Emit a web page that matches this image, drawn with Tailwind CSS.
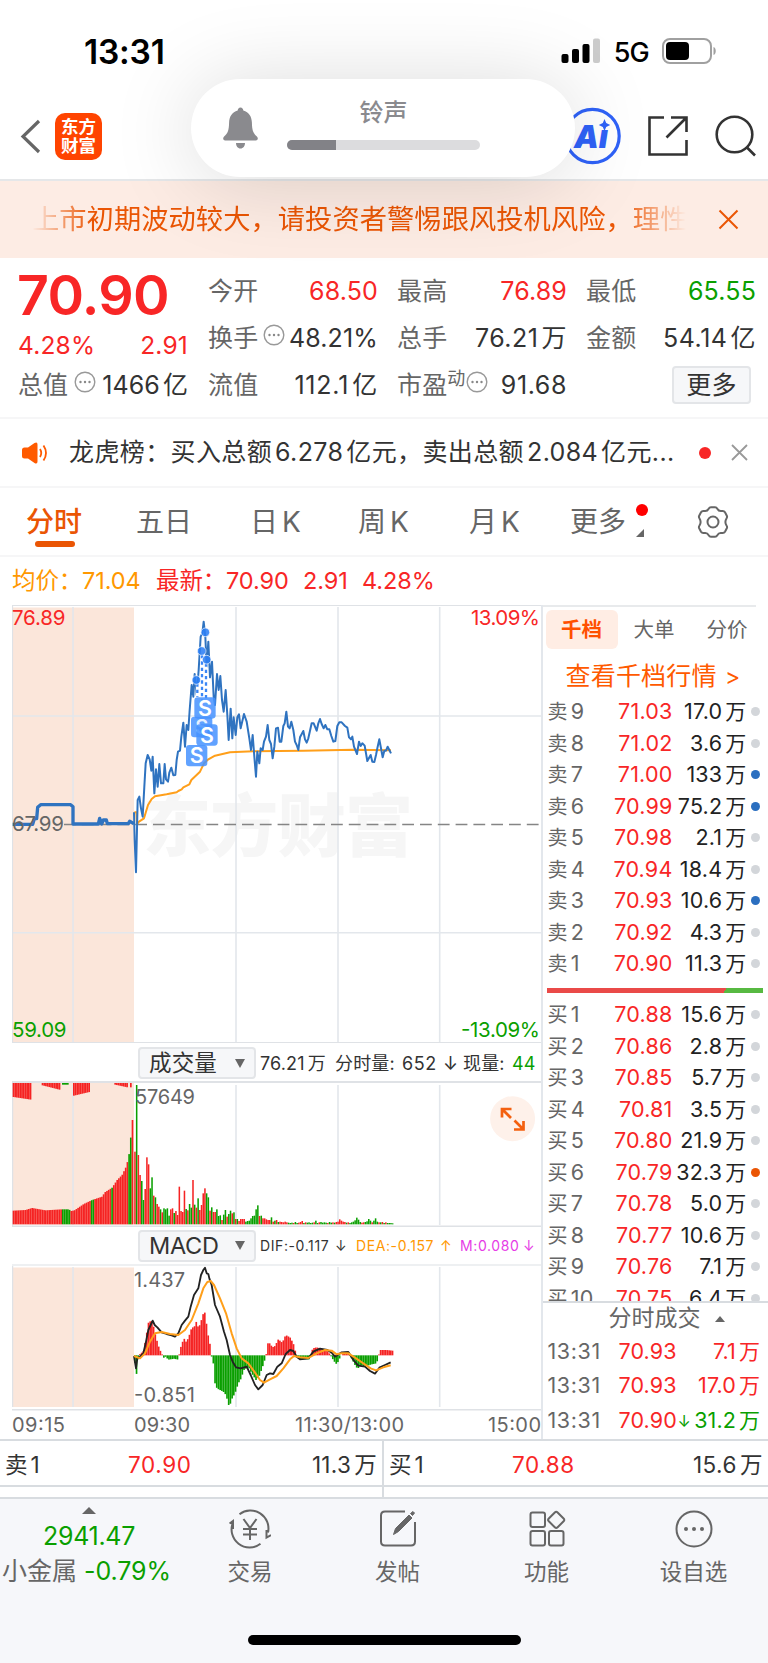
<!DOCTYPE html>
<html lang="zh-CN">
<head>
    <meta charset="UTF-8">
    <meta name="viewport" content="width=device-width, initial-scale=1.0">
    <title>东方财富</title>
    <script src="https://cdn.jsdelivr.net/npm/@tailwindcss/browser@4"></script>
</head>
<body class="w-[768px] h-[1663px] overflow-hidden flex flex-col bg-white text-[#333] font-['Inter','Noto_Sans_CJK_SC',sans-serif] whitespace-nowrap">

    <svg class="hidden">
        <symbol id="more" viewBox="0 0 22 22">
            <circle cx="11" cy="11" r="9.8" fill="none" stroke="#999" stroke-width="1.4"/>
            <circle cx="6.5" cy="11" r="1.2" fill="#888"/><circle cx="11" cy="11" r="1.2" fill="#888"/><circle cx="15.5" cy="11" r="1.2" fill="#888"/>
        </symbol>
    </svg>

    <!-- Header -->
    <header class="relative h-[181px] shrink-0 flex flex-col border-b-2 border-[#e5e7e9]">
        <div class="h-[102px] pl-[84px] pr-[51px] flex items-center justify-between text-black">
            <span class="mt-[2px] text-[33.500px] font-semibold tracking-[-0.2px]">13:31</span>
            <div class="flex items-center gap-[13px]">
                <svg class="w-[40px] h-[26px]" viewBox="0 0 40 26">
                    <rect x="0.5" y="16" width="7" height="9" rx="2"/>
                    <rect x="11" y="11" width="7" height="14" rx="2"/>
                    <rect x="21.500" y="6" width="7" height="19" rx="2"/>
                    <rect x="32" y="0.500" width="7" height="24.500" rx="2" fill="#ccc"/>
                </svg>
                <span class="mt-[3px] text-[27px] font-medium tracking-[-0.8px] leading-none">5G</span>
                <svg class="w-[55px] h-[26px]" viewBox="0 0 55 26">
                    <rect x="1" y="1" width="48" height="24" rx="7" fill="none" stroke="#a0a0a0" stroke-width="2"/>
                    <rect x="4" y="4" width="23" height="18" rx="4"/>
                    <path d="M51.500 9v8c3-1 3-7 0-8z" fill="#a0a0a0"/>
                </svg>
            </div>
        </div>
        <div class="h-[68px] pl-[20px] flex items-center">
            <svg class="w-[22px] h-[36px]" viewBox="0 0 22 36"><path d="M19 3L3 18.500 19 34" fill="none" stroke="#666" stroke-width="3.200"/></svg>
            <div class="ml-[13px] w-[47px] h-[47px] rounded-[10px] bg-[#ff4400] text-white text-[17.500px] leading-[19px] font-bold flex flex-col items-center justify-center">
                <span>东方</span><span>财富</span>
            </div>
            <svg class="ml-[462px] w-[60px] h-[60px]" viewBox="0 0 60 60">
                <circle cx="28.500" cy="30" r="26.700" fill="none" stroke="#2f62f8" stroke-width="3.200"/>
                <text x="10" y="42" font-size="32" font-weight="900" font-style="italic" fill="#2f62f8" textLength="34" lengthAdjust="spacingAndGlyphs">Aı</text>
                <path d="M40.500 13l1.700 4 4 2-4 2-1.700 4-1.700-4-4-2 4-2z" fill="#2f62f8"/>
            </svg>
            <svg class="ml-[23px] w-[42px] h-[42px]" viewBox="0 0 42 42" fill="none" stroke="#333" stroke-width="2.600">
                <path d="M17 2.500H2.500v37h37V25M24 2.500h15.500V17M39 3L19.500 22.500"/>
            </svg>
            <svg class="ml-[25px] w-[44px] h-[44px]" viewBox="0 0 44 44" fill="none" stroke="#333" stroke-width="2.600">
                <circle cx="20.500" cy="20.500" r="17.800"/><path d="M32.500 33L41 41.500"/>
            </svg>
        </div>
        <!-- Ringer volume toast -->
        <div class="absolute z-10 left-[191px] top-[79px] w-[384px] h-[98px] rounded-[49px] bg-white shadow-[0_4px_85px_rgba(0,0,0,0.15)] flex">
            <svg class="ml-[31px] mt-[28px] w-[37px] h-[43px]" viewBox="0 0 37 43" fill="#8a8a8e">
                <path d="M18.500 0.500c1.800 0 2.600 1.400 2.800 3 5.700 1.500 8.400 6.300 8.600 12 .2 8 1.200 10.500 5 14 1.400 1.400 1.300 4-1.100 4H3.200c-2.400 0-2.500-2.600-1.100-4 3.800-3.500 4.800-6 5-14 .2-5.700 2.900-10.500 8.600-12 .2-1.600 1-3 2.800-3zM14 36h9c0 3-1.800 5.500-4.500 5.500S14 39 14 36z"/>
            </svg>
            <div class="ml-[28px] mt-[20px] w-[193px] flex flex-col items-center">
                <span class="text-[24px] leading-[28px] font-medium text-[#8a8a8e]">铃声</span>
                <div class="mt-[13px] w-full h-[10px] rounded-full bg-[#dcdcde] overflow-hidden"><div class="w-[49px] h-full bg-[#828287]"></div></div>
            </div>
        </div>
    </header>

    <!-- Risk notice -->
    <div class="h-[77px] shrink-0 pl-[32px] flex items-center bg-[#fdece4] text-[#ea5504]">
        <div class="w-[654px] overflow-hidden text-[27.25px] leading-[40px] tracking-[0.06px] mask-[linear-gradient(to_right,transparent,black_9%,black_90%,transparent)]">上市初期波动较大，请投资者警惕跟风投机风险，理性</div>
        <svg class="ml-[32px] w-[21px] h-[21px]" viewBox="0 0 21 21"><path d="M1.500 1.500l18 18M19.500 1.500l-18 18" stroke="#ea5504" stroke-width="2"/></svg>
    </div>

    <!-- Quote -->
    <section class="h-[161px] shrink-0 pt-[10px] pl-[18px] flex gap-5 border-b-2 border-[#f6f6f7] text-[25px] leading-[47px]">
        <div class="w-[170px] shrink-0 text-[#f82626]">
            <div class="h-[54px] leading-[54px] text-[55.500px] font-semibold tracking-[-0.7px] -ml-[1px]">70.90</div>
            <div class="h-[40px] leading-[46px] flex justify-between text-[24.5px] tracking-[0.2px]"><span>4.28%</span><span>2.91</span></div>
            <div class="flex justify-between text-[#333]"><span class="text-[#666]">总值</span><svg class="mt-[9px] w-[22px] h-[22px]"><use href="#more"/></svg><span class="tracking-[0.1px]">1466<span class="ml-[3px]">亿</span></span></div>
        </div>
        <div class="w-[548px] grid grid-cols-3 gap-x-[19px] auto-rows-[47px] content-start tracking-[0.15px]">
            <div class="flex justify-between"><span class="text-[#666]">今开</span><span class="text-[#f82626]">68.50</span></div>
            <div class="flex justify-between"><span class="text-[#666]">最高</span><span class="text-[#f82626]">76.89</span></div>
            <div class="flex justify-between"><span class="text-[#666]">最低</span><span class="text-[#0a9f00]">65.55</span></div>
            <div class="flex justify-between"><span class="text-[#666]">换手</span><svg class="mt-[9px] w-[22px] h-[22px]"><use href="#more"/></svg><span>48.21%</span></div>
            <div class="flex justify-between"><span class="text-[#666]">总手</span><span class="tracking-[0.5px]">76.21<span class="ml-[3px]">万</span></span></div>
            <div class="flex justify-between"><span class="text-[#666]">金额</span><span class="tracking-[0.5px]">54.14<span class="ml-[3px]">亿</span></span></div>
            <div class="flex justify-between"><span class="text-[#666]">流值</span><span class="tracking-[0.8px]">112.1<span class="ml-[3px]">亿</span></span></div>
            <div class="flex"><span class="text-[#666]">市盈</span><span class="text-[18px] leading-[34px] text-[#666]">动</span><svg class="mt-[9px] ml-[1px] w-[22px] h-[22px]"><use href="#more"/></svg><span class="ml-auto tracking-[0.6px]">91.68</span></div>
            <div class="flex justify-end pr-[5px] pt-[4px]"><span class="w-[79px] h-[38px] rounded border-2 border-[#e3e5e8] bg-[#f6f7f9] text-center leading-[34px]">更多</span></div>
        </div>
    </section>

    <!-- News line -->
    <div class="h-[69px] shrink-0 pl-[21px] pr-[20px] flex items-center border-b-2 border-[#f6f6f7] text-[25px] tracking-[0.38px]">
        <svg class="w-[28px] h-[24px]" viewBox="0 0 28 24">
            <path d="M1 9q0-2.500 2.500-2.500H7L13.500 2q3-1.500 3 1.500v17q0 3-3 1.500L7 17.500H3.500Q1 17.500 1 15z" fill="#ff5a00"/>
            <path d="M19 8q2.500 4 0 8M22.500 4.500q5 7.500 0 15" fill="none" stroke="#ff5a00" stroke-width="1.800"/>
        </svg>
        <div class="ml-[20px] w-[608px]">龙虎榜：买入总额<span class="mx-[3px]">6.278</span>亿元，卖出总额<span class="mx-[3px]">2.084</span>亿元...</div>
        <span class="ml-[22px] w-[12px] h-[12px] rounded-full bg-[#f82626]"></span>
        <svg class="ml-auto w-[17px] h-[17px]" viewBox="0 0 17 17"><path d="M1 1l15 15M16 1L1 16" stroke="#999" stroke-width="1.800"/></svg>
    </div>

    <!-- Period tabs -->
    <nav class="h-[69px] shrink-0 pl-[26px] pr-[38px] flex items-center border-b-2 border-[#f6f6f7] text-[28px] text-[#666]">
        <div class="w-[110px]"><span class="relative text-[#ea5504] font-medium">分时<i class="absolute left-[9px] -bottom-[8px] w-[40px] h-[6px] rounded-full bg-[#ea5504]"></i></span></div>
        <span class="w-[114px]">五日</span>
        <span class="w-[108px] flex gap-[4px]">日<span>K</span></span>
        <span class="w-[111px] flex gap-[4px]">周<span>K</span></span>
        <span class="w-[101px] flex gap-[4px]">月<span>K</span></span>
        <span class="relative">更多<i class="absolute -right-[22px] top-[3px] w-[12px] h-[12px] rounded-full bg-[#ff0000]"></i>
            <svg class="absolute -right-[18px] bottom-[6px] w-[8px] h-[8px]" viewBox="0 0 8 8"><path d="M8 0v8H0z" fill="#666"/></svg>
        </span>
        <svg class="ml-auto w-[34px] h-[34px]" viewBox="0 0 34 34" fill="none" stroke="#666" stroke-width="2">
            <path d="M12.500 4q1-1.800 2.500-1.800h4q1.500 0 2.500 1.800 1 2 3.200 2h2q1.500 0 2.300 1.300l1.800 3.400q.7 1.400-.3 2.800-2.200 3.500 0 7 1 1.400.3 2.800L29 26.700q-.8 1.300-2.300 1.300h-2q-2.200 0-3.200 2-1 1.800-2.500 1.800h-4q-1.500 0-2.500-1.800-1-2-3.200-2h-2Q5.800 28 5 26.700l-1.800-3.400q-.7-1.400.3-2.800 2.200-3.500 0-7-1-1.400-.3-2.800L5 7.300Q5.800 6 7.300 6h2q2.200 0 3.200-2z"/>
            <circle cx="17" cy="17" r="5.500"/>
        </svg>
    </nav>

    <div class="h-[48px] shrink-0 pl-[12px] flex items-center text-[23.500px] tracking-[-0.1px] text-[#f82626]">
        <span class="w-[70px] text-[#ff9800]">均价：</span><span class="w-[74px] text-[#ff9800]">71.04</span>
        <span class="w-[70px]">最新：</span><span class="w-[77px]">70.90</span><span class="w-[59px]">2.91</span><span>4.28%</span>
    </div>

    <main class="h-[834px] shrink-0 flex">
        <!-- Charts -->
        <div class="w-[542.500px] pl-[12px] border-r-2 border-[#e3e7ec] flex flex-col">
            <svg class="w-[529px] h-[438px] shrink-0" viewBox="12 605 529 438">
                <rect x="12.500" y="607.500" width="121.500" height="434.500" fill="#fbe6da"/>
                <text x="143" y="851" font-size="68" font-weight="900" fill="#f6f6f6" textLength="270">东方财富</text>
                <path d="M12 716H541M12 932.700H541M73 607V1042M236 607V1042M338 607V1042M439.700 607V1042" stroke="#e3e7ec" stroke-width="1.600"/>
                <path d="M12.500 605V1043M12 605.500H541M12 1042.500H541" stroke="#dfe2e6" stroke-width="1.200"/>
                <path d="M64 824.500H541" stroke="#858585" stroke-width="1.500" stroke-dasharray="11.800 6"/>
                <g transform="translate(120 600) scale(.33333)" fill="none" stroke-linejoin="round">
                    <polyline stroke="#ff9f1a" stroke-width="6" points="43,637 49,637 51,672 57,665 72,655 84,615 95,597 105,589 140,583 170,577 175,573 185,568 190,562 208,553 214,540 240,515 252,490 265,478 285,467 330,457 400,454 550,452 700,449 813,451"/>
                    <polyline stroke="#2f73c0" stroke-width="10" points="-322,673 -262,673 -257,656 -250,656 -247,622 -238,614 -148,614 -141,620 -141,672 -65,672 -61,655 -55,672 -50,660 -41,660 -38,671 25,671 29,664 42,671"/>
                    <polyline stroke="#2f73c0" stroke-width="6" points="42,637 44,720 48,817 53,600 58,590 63,625 68,650 73,560 77,490 83,465 89,478 94,512 98,470 103,580 108,508 113,560 118,492 123,550 130,550 134,492 138,538 144,545 148,518 154,503 160,526 166,525 170,480 174,455 180,452 184,410 190,368 195,440 200,375 205,390 209,330 215,255 220,290 224,222 230,285 236,210 242,110 247,100 251,65 256,110 260,200 265,125 270,232 276,185 281,290 285,315 291,222 296,270 301,228 306,300 311,335 317,270 322,345 326,420 332,326 337,415 341,352 347,405 352,352 357,343 362,385 372,342 380,365 388,415 393,450 398,405 403,470 408,530 412,455 418,490 422,445 428,450 432,425 438,410 443,375 448,420 453,432 458,475 463,440 468,385 474,383 479,425 484,425 490,378 494,370 499,335 504,380 509,385 514,365 520,390 525,425 530,435 535,450 540,412 550,393 555,418 560,428 565,415 575,370 581,370 590,392 595,370 600,357 605,372 611,385 616,375 622,388 628,388 634,408 640,425 646,423 652,378 658,367 665,367 675,378 682,383 687,412 693,418 697,410 702,440 711,462 717,425 722,438 727,430 734,437 742,483 752,465 757,485 763,486 768,465 773,440 778,418 784,450 788,472 793,452 798,452 803,440 808,450 813,460"/>
                    <!-- sell markers -->
                    <path d="M246 165V300M258 190V300M232 250V290" stroke="#fff" stroke-width="9"/>
                    <path d="M246 165V300M258 190V300M232 250V290" stroke="#3a86f5" stroke-width="7" stroke-dasharray="10 9"/>
                    <g fill="#2c80f5" fill-opacity=".88" stroke="#fff" stroke-width="2">
                        <circle cx="256" cy="97" r="13"/><circle cx="245" cy="153" r="13"/><circle cx="260" cy="179" r="13"/><circle cx="229" cy="240" r="13"/>
                    </g>
                    <g fill="#4592ff" fill-opacity=".85">
                        <rect x="213" y="350" width="64" height="62" rx="10"/><text x="245" y="402" font-size="60" fill="#fff" font-weight="600" text-anchor="middle">S</text>
                        <rect x="223" y="292" width="64" height="64" rx="10"/><rect x="229" y="373" width="64" height="64" rx="10"/><rect x="198" y="435" width="64" height="64" rx="10"/>
                    </g>
                    <g fill="#fff" font-size="64" font-weight="600" text-anchor="middle"><text x="255" y="347">S</text><text x="261" y="428">S</text><text x="230" y="490">S</text></g>
                </g>
                <g font-size="20.500">
                    <text x="12" y="625" fill="#f82626" textLength="53.500">76.89</text>
                    <text x="471" y="625" fill="#f82626" textLength="69">13.09%</text>
                    <text x="12" y="831" fill="#666" textLength="52">67.99</text>
                    <text x="12" y="1036.500" fill="#0a9f00" textLength="54.500">59.09</text>
                    <text x="461" y="1036.500" fill="#0a9f00" textLength="79">-13.09%</text>
                </g>
            </svg>

            <div class="h-[40px] shrink-0 pl-[126px] pt-[2px] flex items-center border-b-2 border-[#dfe2e6] text-[18px] tracking-[0.15px]">
                <div class="w-[118px] h-[32px] pl-[9px] pr-[9px] rounded border-2 border-[#e3e5e8] bg-[#f6f7f9] flex items-center justify-between text-[22.500px] leading-none">成交量<svg class="w-[10px] h-[9px]" viewBox="0 0 10 9"><path d="M0 0h10L5 9z" fill="#666"/></svg></div>
                <span class="ml-[4px] w-[75px]">76.21<span class="ml-[3px]">万</span></span><span class="w-[67px]">分时量:</span><span class="w-[41px] tracking-[0.6px]">652</span><span class="w-[20px]">↓</span><span class="w-[49px]">现量:</span><span class="text-[#0a9f00]">44</span>
            </div>

            <svg class="w-[529px] h-[144px] shrink-0" viewBox="12 1083 529 144">
                <rect x="12.500" y="1082.500" width="121.500" height="142" fill="#fbe6da"/>
                <path d="M73 1085V1225M236 1085V1225M338 1085V1225M439.700 1085V1225" stroke="#e3e7ec" stroke-width="1.600"/>
                <path d="M12.500 1082V1227M12 1226.300H541" stroke="#dfe2e6" stroke-width="1.500"/>
                <g id="volume" transform="translate(0 1070) scale(.33333)"></g>
                <text x="135" y="1104" font-size="20" fill="#666" textLength="60">57649</text>
                <circle cx="512.600" cy="1118.700" r="22.500" fill="#fef1ea"/>
                <path d="M502 1117.500V1109h9.500M502.500 1109.500l8.500 8.500M523.500 1121v8.500H514M523 1129l-8.500-8.500" fill="none" stroke="#f4600f" stroke-width="2.700"/>
            </svg>

            <div class="h-[39px] shrink-0 pl-[126px] flex items-center border-b-2 border-[#eef0f2] text-[14px] tracking-[0.6px]">
                <div class="w-[118px] h-[32px] pl-[9px] pr-[9px] rounded border-2 border-[#e3e5e8] bg-[#f6f7f9] flex items-center justify-between text-[23.500px] tracking-[-0.3px] leading-none">MACD<svg class="w-[10px] h-[9px]" viewBox="0 0 10 9"><path d="M0 0h10L5 9z" fill="#666"/></svg></div>
                <span class="ml-[4px] w-[75px]">DIF:-0.117</span><span class="w-[21px]">↓</span>
                <span class="w-[84px] text-[#ff9800]">DEA:-0.157</span><span class="w-[20px] text-[#ff9800]">↑</span>
                <span class="w-[63px] text-[#e63ce6]">M:0.080</span><span class="text-[#e63ce6]">↓</span>
            </div>

            <svg class="w-[529px] h-[173px] shrink-0" viewBox="12 1266 529 173">
                <rect x="12.500" y="1267.500" width="121.500" height="139.500" fill="#fbe6da"/>
                <path d="M73 1267V1407M236 1267V1407M338 1267V1407M439.700 1267V1407" stroke="#e3e7ec" stroke-width="1.600"/>
                <path d="M12.500 1265V1407M12 1409.700H541" stroke="#dfe2e6" stroke-width="1.500"/>
                <g font-size="20" fill="#666">
                    <text x="134" y="1287" textLength="51">1.437</text>
                    <text x="134" y="1401.500" textLength="61">-0.851</text>
                    <text x="12" y="1432" textLength="53">09:15</text>
                    <text x="134" y="1432" textLength="56">09:30</text>
                    <text x="295" y="1432" textLength="109">11:30/13:00</text>
                    <text x="488" y="1432" textLength="53">15:00</text>
                </g>
                <g transform="translate(120 1250) scale(.33333)" fill="none" stroke-linejoin="round">
                    <g id="macd"></g>
                    <polyline stroke="#222" stroke-width="5.500" points="42,318 48,355 52,325 60,320 70,310 77,280 85,240 92,225 98,212 104,225 112,232 125,247 140,252 155,256 165,260 175,250 185,225 195,212 205,200 212,170 222,135 235,115 243,75 250,60 255,53 260,70 265,72 268,85 275,105 285,165 300,200 312,245 320,270 330,315 338,335 348,352 362,355 380,350 392,375 405,405 415,418 428,405 440,375 450,370 460,372 472,350 485,340 497,312 510,300 520,303 530,320 540,328 565,325 580,305 600,296 622,300 635,308 645,320 665,307 685,306 700,330 715,347 735,350 750,363 765,371 778,353 795,345 812,337"/>
                    <polyline stroke="#ff9f1a" stroke-width="6" points="42,318 60,325 75,310 90,275 105,250 125,246 150,252 175,255 195,240 215,210 235,160 250,115 262,96 272,93 282,105 300,145 318,190 335,250 350,295 365,325 385,340 405,368 420,390 432,398 450,388 470,378 490,355 510,328 522,318 540,322 565,324 590,310 615,300 635,302 650,313 665,310 685,310 705,323 730,340 752,355 768,361 790,352 812,346"/>
                </g>
            </svg>
        </div>

        <!-- Order book -->
        <aside class="w-[225.500px] flex flex-col">
            <div class="w-[213px] h-[45px] pt-[3px] pl-[3px] flex border-t-2 border-[#e8eaec] text-[20.500px] leading-[40px] text-center text-[#666]">
                <span class="w-[72px] shrink-0 h-[39px] rounded-[6px] bg-[#ffede4] text-[#ff5000] font-bold">千档</span><span class="w-[73px] shrink-0">大单</span><span class="w-[73px] shrink-0">分价</span>
            </div>
            <div class="h-[46px] pl-[23px] leading-[52px] text-[25px] tracking-[0.2px] text-[#ff5a00]">查看千档行情 <span class="ml-[1px] text-[23px]">&gt;</span></div>
            <div id="asks" class="h-[292px]"></div>
            <div class="ml-[4px] w-[216px] h-[5px] flex bg-[linear-gradient(120deg,#ea4a48_82%,#57b941_82%)]"></div>
            <div id="bids" class="mt-[6px] h-[304px] overflow-hidden border-b-2 border-[#d8dce0]"></div>
            <div class="h-[31px] pl-[66px] flex items-center gap-[14px] text-[23px] leading-none text-[#666]">分时成交<svg class="w-[10px] h-[6px]" viewBox="0 0 10 6"><path d="M0 6h10L5 0z" fill="#666"/></svg></div>
            <div id="trades"></div>
        </aside>
    </main>

    <!-- Best ask / bid -->
    <div class="relative h-[60px] shrink-0 flex border-y-2 border-[#d8dce0] text-[22.500px] leading-[47px]">
        <div class="absolute w-full h-[46px] border-b-2 border-[#d8dce0]"></div>
        <div class="w-[384px] pl-[5px] pr-[5px] flex border-r-2 border-[#d8dce0]"><span class="w-[123px]">卖<span class="ml-[3px]">1</span></span><span class="tracking-[0.6px] text-[#f82626]">70.90</span><span class="ml-auto tracking-[0.3px]">11.3<span class="ml-[3px]">万</span></span></div>
        <div class="w-[384px] pl-[5px] pr-[5px] flex"><span class="w-[123px]">买<span class="ml-[3px]">1</span></span><span class="tracking-[0.6px] text-[#f82626]">70.88</span><span class="ml-auto tracking-[0.5px]">15.6<span class="ml-[3px]">万</span></span></div>
    </div>

    <!-- Bottom bar -->
    <footer class="flex-1 flex flex-col bg-[#f6f7fa] text-[22.500px] text-[#666]">
        <div class="h-[136px] flex">
            <div class="w-[178px] pt-[8px] flex flex-col items-center text-[25px] leading-[35px]">
                <svg class="w-[14px] h-[7px]" viewBox="0 0 14 7"><path d="M0 7h14L7 0z" fill="#666"/></svg>
                <span class="mt-[5px] text-[#0a9f00] tracking-[-0.3px]">2941.47</span>
                <div class="w-full pl-[2px] flex gap-[7px]">小金属<span class="text-[#0a9f00] tracking-[-0.1px]">-0.79%</span></div>
            </div>
            <div class="w-[144px] pt-[9px] flex flex-col items-center leading-[35px]">
                <svg class="mb-[4px] w-[42px] h-[42px] shrink-0" viewBox="0 0 42 42" fill="none" stroke="#666" stroke-width="2">
                    <path d="M10.500 6.200A18 18 0 0 1 39 24.500M31.500 35.800A18 18 0 0 1 4 14.500M0.500 15.500L4 13v8M42 27l-4.500 2.500V22M14.500 11l6.500 9 6.500-9M21 20v12M14 21h14M14 26.500h14"/>
                </svg><span>交易</span>
            </div>
            <div class="w-[151px] pt-[9px] flex flex-col items-center leading-[35px]">
                <svg class="mb-[4px] w-[42px] h-[42px] shrink-0" viewBox="0 0 42 42" fill="none" stroke="#666" stroke-width="2">
                    <path d="M28 3.500H8Q4 3.500 4 7.500v26q0 4 4 4h26q4 0 4-4V14"/><path d="M16.500 26.500l2-6L32 7l3 3-13.500 13.500zM33.500 5.500l2.500-2 1.500 1.500-2 2.500z" fill="#666" stroke-width="1"/>
                </svg><span>发帖</span>
            </div>
            <div class="w-[147px] pt-[9px] flex flex-col items-center leading-[35px]">
                <svg class="mb-[4px] w-[42px] h-[42px] shrink-0" viewBox="0 0 42 42" fill="none" stroke="#666" stroke-width="2">
                    <rect x="4.500" y="4.500" width="14.500" height="14.500" rx="2"/><rect x="4.500" y="23" width="14.500" height="14.500" rx="2"/><rect x="23" y="23" width="14.500" height="14.500" rx="2"/><path d="M28.800 4.500q1.400-1.400 2.800 0l6 6q1.400 1.400 0 2.800l-6 6q-1.400 1.400-2.800 0l-6-6q-1.400-1.400 0-2.800z"/>
                </svg><span>功能</span>
            </div>
            <div class="w-[147px] pt-[9px] flex flex-col items-center leading-[35px]">
                <svg class="mb-[4px] w-[42px] h-[42px] shrink-0" viewBox="0 0 42 42">
                    <circle cx="21" cy="21" r="17.500" fill="none" stroke="#666" stroke-width="2"/><circle cx="13" cy="21" r="2" fill="#666"/><circle cx="21" cy="21" r="2" fill="#666"/><circle cx="29" cy="21" r="2" fill="#666"/>
                </svg><span>设自选</span>
            </div>
        </div>
        <div class="ml-[248px] w-[273px] h-[10px] rounded-full bg-black"></div>
    </footer>

<script>
        const dots = { n: 'bg-[#d3d6da]', b: 'bg-[#2b6fc0]', o: 'bg-[#ea5504]' };
        const asks = [[9, '71.03', '17.0', 'n'], [8, '71.02', '3.6', 'n'], [7, '71.00', '133', 'b'], [6, '70.99', '75.2', 'b'], [5, '70.98', '2.1', 'n'], [4, '70.94', '18.4', 'n'], [3, '70.93', '10.6', 'b'], [2, '70.92', '4.3', 'n'], [1, '70.90', '11.3', 'n']];
        const bids = [[1, '70.88', '15.6', 'n'], [2, '70.86', '2.8', 'n'], [3, '70.85', '5.7', 'n'], [4, '70.81', '3.5', 'n'], [5, '70.80', '21.9', 'n'], [6, '70.79', '32.3', 'o'], [7, '70.78', '5.0', 'n'], [8, '70.77', '10.6', 'n'], [9, '70.76', '7.1', 'n'], [10, '70.75', '6.4', 'n']];
        const trades = [['70.93', '', '7.1', 'text-[#f82626]'], ['70.93', '', '17.0', 'text-[#f82626]'], ['70.90', '↓', '31.2', 'text-[#0a9f00]']];

        function bookRows(side, rows) {
            return rows.map(r => `
                <div class="h-[31.5px] pl-[5px] pr-[8px] flex items-center text-[21.5px] tracking-[0.2px] leading-none">
                    <span class="w-[54px] text-[#666] text-[20px]">${side}<span class="ml-[3px] text-[21.5px]">${r[0]}</span></span>
                    <span class="w-[71px] text-right text-[#f82626]">${r[1]}</span>
                    <span class="w-[74px] text-right text-[#222]">${r[2]}<span class="ml-[3px] text-[21px]">万</span></span>
                    <i class="ml-auto w-[9px] h-[9px] rounded-full ${dots[r[3]]}"></i>
                </div>`).join('');
        }
        document.getElementById('asks').innerHTML = bookRows('卖', asks);
        document.getElementById('bids').innerHTML = bookRows('买', bids);
        document.getElementById('trades').innerHTML = trades.map(t => `
                <div class="h-[34.7px] pl-[5px] pr-[8px] flex items-center text-[21.5px] tracking-[0.1px] leading-none">
                    <span class="w-[71px] text-[#666] tracking-[0.6px]">13:31</span>
                    <span class="w-[59px] text-[#f82626]">${t[0]}</span>
                    <span class="w-[12px] text-[16px] text-[#0a9f00]">${t[1]}</span>
                    <span class="ml-auto ${t[3]}">${t[2]}<span class="ml-[3px] text-[21px]">万</span></span>
                </div>`).join('');

        const RED = '#f52323', GREEN = '#0a9f00';
        const bar = (x, y0, y1, c, w) => `<rect x="${x}" y="${Math.min(y0, y1)}" width="${w}" height="${Math.abs(y1 - y0)}" fill="${c}"/>`;
        const lerp = (pts, x) => {
            for (let i = 1; i < pts.length; i++) {
                if (x <= pts[i][0]) {
                    const [a, b] = [pts[i - 1], pts[i]];
                    return a[1] + (b[1] - a[1]) * (x - a[0]) / (b[0] - a[0]);
                }
            }
            return pts[pts.length - 1][1];
        };

        // Volume: call auction part
        let vol = '';
        const auction = [[38, 422], [75, 420], [95, 414], [135, 421], [185, 418], [205, 418], [212, 423], [222, 421], [250, 402], [275, 390], [305, 380], [313, 367], [335, 353], [350, 330], [365, 315], [378, 288], [384, 262], [389, 235], [394, 150], [398, 150]];
        for (let x = 38; x < 397; x += 5.1) {
            const green = (x > 184 && x < 208) || (x > 272 && x < 278) || (x > 332 && x < 337) || (x > 380 && x < 392);
            vol += bar(x, lerp(auction, x + 1), 463, green ? GREEN : RED, 5);
        }
        [[38, 91, 81, 89], [125, 180, 46, 60], [219, 266, 77, 66], [343, 380, 44, 52], [390, 394, 52, 52]].forEach(([a, b, t0, t1]) => {
            for (let x = a; x < b; x += 5.1) vol += bar(x, 38, t0 + (t1 - t0) * (x - a) / (b - a), RED, 5.1);
        });
        vol += bar(186, 38, 44, GREEN, 20);

        // Volume: continuous trading, one bar a minute
        const minutes = 'r245 g45 r255 r315 g333 g390 r357 r262 r283 g355 g322 r377 g382 r402 r410 g418 r427 g415 g418 g415 g437 r418 r415 g429 r423 r435 r350 r423 r426 r362 g417 r421 g402 g413 r330 g404 r413 g385 r420 r405 r370 r355 g370 g382 r422 g412 r426 r426 g418 g438 g436 r450 g434 g420 r440 g432 g422 r430 g427 r447 g447 r453 r447 r447 r447 g455 g453 g452 g445 g438 g437 g418 g406 r438 g437 r445 r445 r448 r450 r450 g442 r455 g452 r450 g456 r455 r456 r457 r455 r457 g458 g459 g458 r459 g456 g459 r458 r456 r453 g459 r457 g458 g457 g459 g458 r457 g452 g459 r457 g456 g458 g457 g458 r459 g456 g458 r457 g458 r456 r455 r448 r452 r455 r456 g458 r457 g459 g457 g455 g451 g443 g449 g456 r458 r457 g456 g454 g447 g452 r457 g452 g445 g455 r457 g457 r456 g459 r457 g459 g459 g459 g460'.split(' ');
        minutes.forEach((m, i) => {
            vol += bar(402.6 + i * 5.12, +m.slice(1), 463, m[0] === 'r' ? RED : GREEN, 4.6);
        });
        document.getElementById('volume').innerHTML = vol;

        // MACD histogram around the zero line
        const hist = [[42, 318], [46, 350], [50, 374], [55, 325], [60, 312], [70, 304], [75, 280], [80, 250], [86, 215], [97, 213], [103, 240], [108, 262], [118, 296], [126, 312], [130, 324], [137, 320], [145, 329], [165, 326], [172, 330], [178, 312], [184, 285], [192, 265], [198, 275], [205, 265], [216, 230], [222, 235], [228, 213], [233, 230], [240, 225], [250, 190], [256, 187], [262, 245], [269, 275], [274, 316], [280, 340], [286, 410], [296, 418], [310, 425], [318, 435], [328, 472], [335, 448], [345, 430], [355, 400], [362, 388], [372, 360], [385, 350], [395, 370], [408, 390], [418, 378], [428, 350], [438, 318], [443, 280], [450, 280], [457, 292], [465, 288], [475, 268], [487, 278], [497, 255], [510, 262], [520, 280], [530, 318], [540, 328], [570, 328], [578, 295], [590, 292], [600, 295], [620, 300], [628, 310], [640, 330], [648, 342], [655, 335], [662, 318], [672, 308], [685, 310], [695, 325], [705, 345], [713, 357], [722, 345], [735, 350], [755, 343], [770, 340], [776, 316], [780, 300], [800, 300], [818, 302]];
        let macd = '';
        for (let x = 42; x < 816; x += 5.12) {
            const y = lerp(hist, x + 2.5);
            macd += bar(x, 316, y, y < 316 ? RED : GREEN, 5);
        }
        document.getElementById('macd').innerHTML = macd;
</script>

</body>
</html>
